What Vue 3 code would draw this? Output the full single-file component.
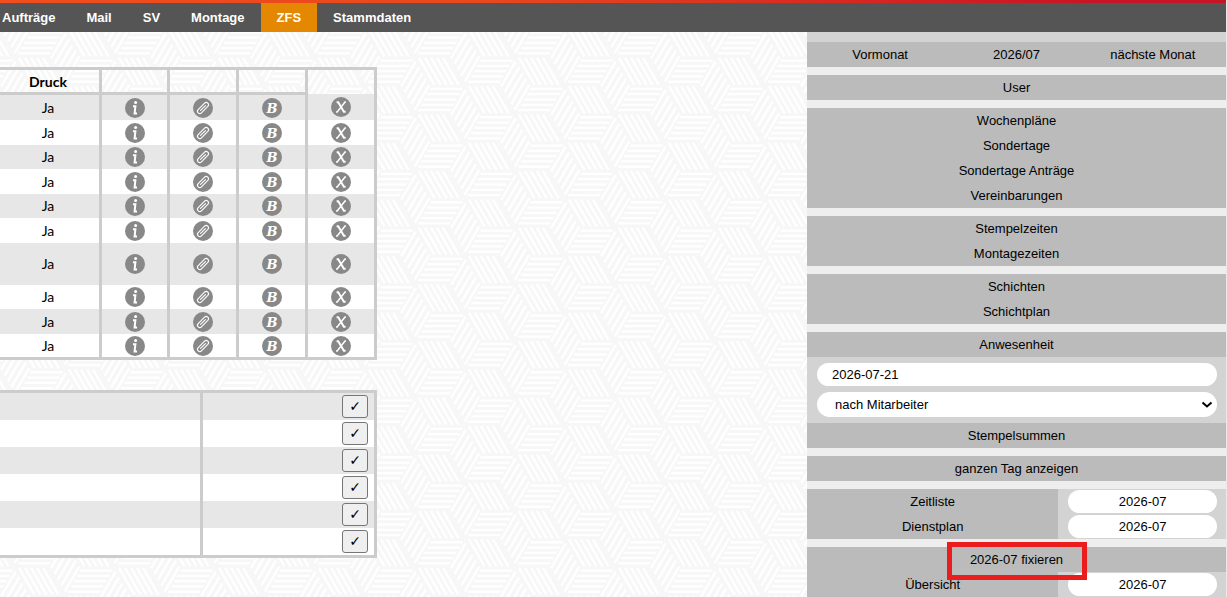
<script setup>
const navItems = ['Aufträge', 'Mail', 'SV', 'Montage', 'ZFS', 'Stammdaten']
const activeItem = 'ZFS'

const rows = ['r26', 'r25', 'r24', 'r25', 'r24', 'r25', 'r42', 'r24', 'r25', 'r25']
const checks = 6

const tileRows = [-1, 0, 1, 2, 3]
const lines = [0, 1, 2, 3, 4]
const third = 170 / 3

const horizontal = lines.map((n) => {
  const y = 3.6 + n * 5.3
  const x = -y * 0.58
  return `M${x + 1} ${y}h32`
}).join('')
const falling = lines.map((n) => `M${4 + n * 6} 0.8l15.6 27`).join('')
const rising = lines.map((n) => {
  const t = 0.1 + n * 0.205
  const x = 16.6 * t
  const y = 28.3 * t
  return `M${x - 1} ${y + 1.8}l-14.5 24.8`
}).join('')
</script>

<template>
  <div class="page">
    <header class="top">
      <nav class="nav" aria-label="Hauptmenü">
        <a v-for="item in navItems" :key="item" href="#" :class="{ active: item === activeItem }">{{ item }}</a>
      </nav>
    </header>
    <div class="body">
      <main class="main">
        <svg class="pattern" aria-hidden="true">
          <defs>
            <g id="weave" fill="none" stroke="#fff" stroke-width="2.3">
              <path :d="horizontal" transform="translate(16.6 28.3)" />
              <path :d="falling" />
              <path :d="rising" />
            </g>
            <pattern id="tile" x="15" y="25" width="100" height="170" patternUnits="userSpaceOnUse">
              <template v-for="r in tileRows" :key="r">
                <use href="#weave" :y="r * third" />
                <use href="#weave" x="100" :y="r * third" />
                <use href="#weave" x="50" :y="(r - 0.5) * third" />
              </template>
            </pattern>
            <symbol id="ico-info" viewBox="0 0 20 20">
              <circle cx="10" cy="10" r="10" fill="#888" />
              <circle cx="10.6" cy="4.6" r="1.5" fill="#fff" />
              <path d="M8 8.200H10.400L9.600 15.600H12" fill="none" stroke="#fff" stroke-width="2" />
            </symbol>
            <symbol id="ico-clip" viewBox="0 0 20 20">
              <circle cx="10" cy="10" r="10" fill="#888" />
              <path d="M13.500 10H6.500M13.500 12.300H5.500a2.300 2.300 0 0 1 0-4.600H14.500a2.300 2.300 0 0 1 0 4.600" transform="rotate(-45 10 10)" fill="none" stroke="#fff" stroke-width="1.100" stroke-linecap="round" />
            </symbol>
            <symbol id="ico-b" viewBox="0 0 20 20">
              <circle cx="10" cy="10" r="10" fill="#888" />
              <text x="10" y="15" text-anchor="middle" fill="#fff" font-family="DejaVu Serif, serif" font-size="13" font-weight="bold" font-style="italic">B</text>
            </symbol>
            <symbol id="ico-x" viewBox="0 0 20 20">
              <circle cx="10" cy="10" r="10" fill="#888" />
              <path d="M5.600 5.300H7.200L12.900 14.700H14.600" fill="none" stroke="#fff" stroke-width="2" />
              <path d="M15 5.100H14L6.200 14.900H5" fill="none" stroke="#fff" stroke-width="1.500" />
            </symbol>
          </defs>
          <rect width="100%" height="100%" fill="url(#tile)" />
        </svg>

        <table class="list">
          <colgroup><col class="c-print"><col class="c-first"><col class="c-icon"><col class="c-icon"><col class="c-icon"></colgroup>
          <thead>
            <tr><th>Druck</th><th></th><th></th><th></th><th class="open"></th></tr>
          </thead>
          <tbody>
            <tr v-for="(size, i) in rows" :key="i" :class="size">
              <td>Ja</td>
              <td><button class="icon" aria-label="Info"><svg><use href="#ico-info" /></svg></button></td>
              <td><button class="icon" aria-label="Anhang"><svg><use href="#ico-clip" /></svg></button></td>
              <td><button class="icon" aria-label="Bearbeiten"><svg><use href="#ico-b" /></svg></button></td>
              <td><button class="icon" aria-label="Löschen"><svg><use href="#ico-x" /></svg></button></td>
            </tr>
          </tbody>
        </table>

        <table class="confirm">
          <tbody>
            <tr v-for="n in checks" :key="n">
              <td class="wide"></td>
              <td class="action"><button class="check">✓</button></td>
            </tr>
          </tbody>
        </table>
      </main>

      <aside class="side">
        <div class="group months">
          <a href="#">Vormonat</a><a href="#">2026/07</a><a href="#">nächste Monat</a>
        </div>
        <div class="group"><a href="#">User</a></div>
        <div class="group">
          <a href="#">Wochenpläne</a><a href="#">Sondertage</a><a href="#">Sondertage Anträge</a><a href="#">Vereinbarungen</a>
        </div>
        <div class="group"><a href="#">Stempelzeiten</a><a href="#">Montagezeiten</a></div>
        <div class="group"><a href="#">Schichten</a><a href="#">Schichtplan</a></div>
        <div class="group">
          <a href="#">Anwesenheit</a>
          <div class="fields">
            <input class="pill" type="text" value="2026-07-21" aria-label="Datum">
            <div class="picker">
              <select class="pill" aria-label="Sortierung"><option>nach Mitarbeiter</option></select>
              <svg class="chevron" viewBox="0 0 12 8" aria-hidden="true"><path d="M1.500 1.500L6 5.500L10.500 1.500" fill="none" stroke="#000" stroke-width="2" /></svg>
            </div>
          </div>
          <a href="#">Stempelsummen</a>
        </div>
        <div class="group"><a href="#">ganzen Tag anzeigen</a></div>
        <div class="group">
          <div class="split"><a href="#">Zeitliste</a><div><input class="pill mid" type="text" value="2026-07" aria-label="Monat Zeitliste"></div></div>
          <div class="split"><a href="#">Dienstplan</a><div><input class="pill mid" type="text" value="2026-07" aria-label="Monat Dienstplan"></div></div>
        </div>
        <div class="group">
          <a href="#" class="marked">2026-07 fixieren</a>
          <div class="split"><a href="#">Übersicht</a><div><input class="pill mid" type="text" value="2026-07" aria-label="Monat Übersicht"></div></div>
        </div>
      </aside>
    </div>
  </div>
</template>

<style>
body { margin: 0; overflow: hidden; }
</style>

<style scoped>
.page {
  display: flex;
  flex-direction: column;
  min-height: 100vh;
  box-sizing: border-box;
  border-right: 1px solid #f3e6e8;
  font: 13px/25px "Liberation Sans", Arial, sans-serif;
  color: #000;
}
.page *, .page *::after { box-sizing: border-box; }
a { color: inherit; text-decoration: none; }
.top { padding-top: 3px; background: linear-gradient(90deg, #f04e1e, #e9471e 40%, #c41425 90%); }
.nav { display: flex; gap: 1px; padding-left: 2px; background: #555; overflow: hidden; }
.nav a { padding: 0 15px; color: #fff; font-weight: bold; line-height: 29px; }
.nav a:first-child { padding-left: 0; }
.nav a.active { padding: 0 16px; background: #e38800; }
.body { display: flex; flex: 1; }
.main { position: relative; flex: 1; min-width: 0; overflow: hidden; background: #f7f7f7; padding-top: 35px; }
.pattern { position: absolute; inset: 0; width: 100%; height: 100%; }
table { position: relative; margin-left: -6px; table-layout: fixed; }
.list { width: 383px; border-collapse: collapse; border: 3px solid #ccc; font: 14px/20px Lato, sans-serif; }
.c-print { width: 105px; }
.c-first { width: 68px; }
.c-icon { width: 69px; }
.list th, .list td { padding: 1px 0 0; text-align: center; border-right: 3px solid #ccc; }
.list th { height: 25px; border-bottom: 3px solid #ccc; font-weight: bold; }
.list th.open { border-bottom: 0; }
.r24 { height: 24px; }
.r25 { height: 25px; }
.r26 { height: 26px; }
.r42 { height: 42px; }
tbody tr { background: #fff; }
tbody tr:nth-child(odd) { background: #e7e7e7; }
.icon { display: block; width: 20px; height: 20px; margin: 0 auto; padding: 0; border: 0; background: none; }
.icon svg { display: block; width: 20px; height: 20px; }
.confirm { width: 383px; margin-top: 30px; border: 3px solid #ccc; border-spacing: 0; }
.confirm td { height: 27px; padding: 2px 6px; }
.confirm .wide { width: 206px; border-right: 3px solid #ccc; }
.check {
  display: block; width: 26px; height: 23px; margin-left: auto; padding: 0;
  border: 1px solid #767676; border-radius: 3px; background: #efefef; color: #000;
  font: 14px/21px "DejaVu Sans", sans-serif;
}
.side { flex: 0 0 419px; display: flex; flex-direction: column; gap: 8px; padding-top: 10px; background: linear-gradient(#d3d3d3 10px, #eee 10px); text-align: center; }
.group { background: #bbb; }
.group a { display: block; height: 25px; }
.months { display: flex; padding: 0 5px; }
.months a { flex: 1; }
.fields { display: flex; flex-direction: column; gap: 6px; padding: 6px 9px 6px 10px; background: #d3d3d3; }
.pill { display: block; width: 100%; height: 23px; padding: 0 15px; border: 0; border-radius: 12px; background: #fff; color: #000; font: inherit; line-height: 23px; }
.picker { position: relative; }
.picker .pill { height: 25px; padding: 0 18px; border-radius: 13px; appearance: none; line-height: 25px; }
.chevron { position: absolute; right: 4px; top: 9px; width: 12px; height: 8px; }
.split { display: flex; }
.split a { width: 60%; }
.split div { width: 40%; padding: 1px 9px 1px 10px; background: #d3d3d3; }
.mid { text-align: center; }
.group .marked { position: relative; }
.marked::after {
  content: ""; position: absolute; z-index: 1; top: -5px; left: calc(50% - 70px);
  width: 140px; height: 38px; border: 5px solid #ea1c1e;
}
</style>
